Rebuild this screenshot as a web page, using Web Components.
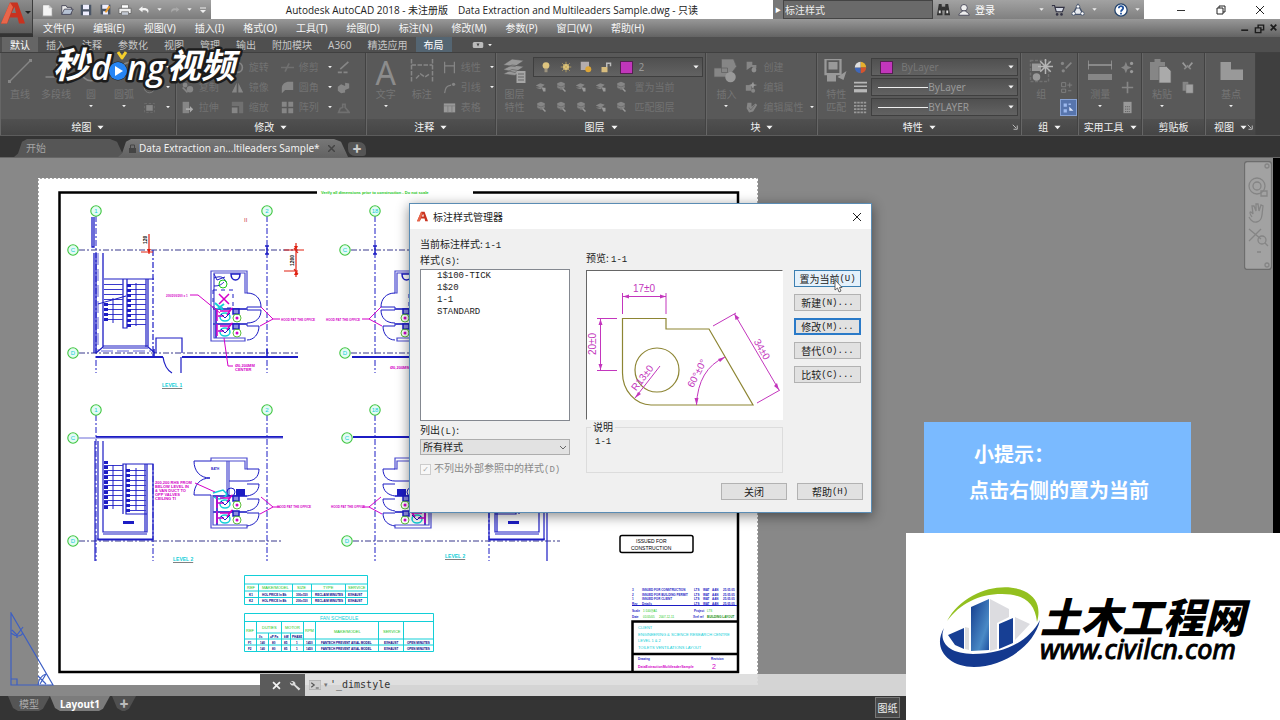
<!DOCTYPE html>
<html lang="zh-CN">
<head>
<meta charset="utf-8">
<title>Autodesk AutoCAD 2018</title>
<style>
  html, body { margin: 0; height: 100%; }
  body { font: 10px/14px "Noto Sans", "Noto Sans CJK SC", sans-serif; color: #e6e6e6; background: #333; overflow: hidden; }
</style>
</head>
<body>
<cad-app></cad-app>
<script>
const BASE = `*{box-sizing:border-box}button,input,select{font:inherit;color:inherit;margin:0;padding:0;border:0;background:none;border-radius:0}button{display:flex;align-items:center;justify-content:center;white-space:nowrap}svg{display:block}a{color:inherit;text-decoration:none}`;
const define = (name, render, css) => customElements.define(name, class extends HTMLElement {
  connectedCallback() {
    if (this.shadowRoot) return;
    this.attachShadow({ mode: "open" }).innerHTML = `<style>${BASE}${css}</style>${render(this)}`;
  }
});

/* ---------- icons on a 16x16 grid ---------- */
const G = "#868686", D = "#707070";
const ICONS = {
  caret: `<path d="M3 5h10l-5 6z" fill="#eee"/>`,
  down: `<path d="M1 4h14l-7 8z" fill="#f4f4f4"/>`,
  new: `<path d="M3 2h7l4 4v9H3z" fill="#f4f4f4" stroke="#888"/><path d="M10 2v4h4" fill="#ccc"/>`,
  open: `<path d="M2 3h5l1 2h5v8H2z" fill="#eee" stroke="#445"/><path d="M2 13l3-6h10l-3 6z" fill="#b6c2d4" stroke="#445"/>`,
  save: `<path d="M1 1h14v14H1z" fill="#4a5566"/><path d="M4 1h8v6H4zM4 10h8v5H4z" fill="#eef"/>`,
  saveas: `<path d="M2 2h12v12H2z" fill="#4a5566"/><path d="M4 2h8v5H4zM5 10h6v4H5z" fill="#eef"/><path d="M7 11l5-8 2 2-5 7z" fill="#e99b2c"/>`,
  print: `<path d="M4 2h8v5H4z" fill="#fff" stroke="#777"/><path d="M1 6h14v6H1z" fill="#eee" stroke="#666"/><path d="M4 10h8v4H4z" fill="#c4cad4" stroke="#777"/>`,
  undo: `<path d="M6 3L1 7l5 4V8.500c5-1 7 1 7 4 3-5-1-8-7-7z" fill="#f2f2f2"/>`,
  redo: `<path d="M10 3l5 4-5 4V8.500c-5-1-7 1-7 4-3-5 1-8 7-7z" fill="#aaa"/>`,
  qmenu: `<path d="M2 3h12v2H2zM2 8h12l-6 6z" fill="#eee"/>`,
  binoc: `<path d="M3 2h3l1 12H1zM10 2h3l2 12H9z" fill="#333"/><path d="M6 5h4v4H6z" fill="#333"/><path d="M3 9h2v3H3zM11 9h2v3h-2z" fill="#ddd"/>`,
  person: `<circle cx="8" cy="5.500" r="3.800" fill="#eee" stroke="#445"/><path d="M2 14c1-4 4-3 4-5h4c0 2 3 1 4 5z" fill="#eee" stroke="#445"/>`,
  cart: `<path d="M1 3h3l2 7h7l2-5H5" fill="#d6dbe6" stroke="#334" stroke-width="1.300"/><circle cx="7" cy="13" r="1.500" fill="#334"/><circle cx="12" cy="13" r="1.500" fill="#334"/>`,
  a360: `<path d="M8 2l6 11H2z" fill="#e8ebf0" stroke="#46536b" stroke-width="1.600"/><circle cx="8" cy="4" r="2" fill="#fff" stroke="#46536b"/><circle cx="3" cy="12" r="2" fill="#fff" stroke="#46536b"/><circle cx="13" cy="12" r="2" fill="#fff" stroke="#46536b"/>`,
  help: `<circle cx="8" cy="8" r="7" fill="#fff" stroke="#26456e" stroke-width="1.500"/><path d="M5.500 6c0-3.500 5-3 5 0 0 1.500-2.500 2-2.500 4M8 11v2" stroke="#1c4f9c" stroke-width="2" fill="none"/>`,
  min: `<path d="M4 8.500h8" stroke="#333"/>`,
  restore: `<path d="M4 6h6v6H4zM6 6V4h6v6h-2" fill="none" stroke="#222"/>`,
  x: `<path d="M4 4l8 8M12 4l-8 8" stroke="#222"/>`,
  wx: `<path d="M3 3l10 10M13 3L3 13" stroke="#f2f2f2" stroke-width="2.500"/>`,
  bmin: `<path d="M2 11.500h11" stroke="#1c1c1c" stroke-width="2.500"/>`,
  brestore: `<path d="M2 7h8v7H2zM6 7V3h8v7h-4" fill="none" stroke="#1c1c1c" stroke-width="2"/>`,
  bx: `<path d="M3 3l10 10M13 3L3 13" stroke="#1c1c1c" stroke-width="3"/>`,
  cam: `<rect x="1" y="4" width="14" height="8" rx="2" fill="#bbb"/><path d="M6 6h4l-2 4z" fill="#444"/>`,
  line: `<path d="M1 15L15 1" stroke="${G}"/><path d="M0 14h2v2H0zM14 0h2v2h-2z" fill="${G}"/>`,
  pline: `<path d="M1 12h7c6 0 6-8 0-8" fill="none" stroke="${G}"/>`,
  circle: `<circle cx="8" cy="8" r="6.500" fill="none" stroke="${G}"/>`,
  arc: `<path d="M2 14C2 7 7 2 14 2" fill="none" stroke="${G}"/>`,
  hatch: `<path d="M2 3h12v11H2z" fill="none" stroke="${D}" stroke-dasharray="3 2"/><path d="M4 5h8v7H4z" fill="${G}"/>`,
  rect: `<path d="M2 4h12v8H2z" fill="none" stroke="${D}"/>`,
  move: `<path d="M8 1v14M1 8h14" stroke="${D}" stroke-width="2"/>`,
  copy: `<circle cx="5" cy="5" r="3" fill="${G}"/><circle cx="11" cy="10" r="4" fill="${G}"/><path d="M2 8l6 6" stroke="${G}" stroke-width="2"/>`,
  stretch: `<path d="M2 1h8v14H2z" fill="${G}"/><path d="M6 9h5V6l4 4-4 4v-3H6z" fill="#aaa"/>`,
  rotate: `<path d="M8 2a6 6 0 1 1-6 6" fill="none" stroke="${G}" stroke-width="2"/>`,
  mirror: `<path d="M7 2v12H1zM9 2v12h6z" fill="${G}"/>`,
  scale: `<path d="M1 1h14v14h-5V6H1z" fill="${D}"/><path d="M1 8h7v7H1z" fill="${G}"/>`,
  trim: `<path d="M0 8h16M10 3L5 13" stroke="${D}" stroke-width="2"/>`,
  fillet: `<path d="M1 15V9c0-5 4-8 9-8h5v10H5z" fill="${G}"/>`,
  array: `<path d="M1 1h6v6H1zM9 1h6v6H9zM1 9h6v6H1zM9 9h6v6H9z" fill="${G}"/>`,
  pen: `<path d="M1 14h5M8 14h5M4 10l10-9" stroke="${G}" stroke-width="2"/>`,
  cubes: `<path d="M1 7l4-3 5 2 0-4 5 1v6l-5 2v3l-5 1-4-3z" fill="${G}"/>`,
  offset: `<path d="M2 14l2-5 3-1V4h3v4l5 6z" fill="none" stroke="${D}" stroke-width="2"/>`,
  dim: `<path d="M1 0v16M15 0v16M1 4h14M4 13l3-3 3 2 3-2" fill="none" stroke="${G}" stroke-dasharray="3 1"/>`,
  linear: `<path d="M2 1v14M14 1v14M2 6h12" fill="none" stroke="${G}" stroke-width="1.500"/>`,
  leader: `<path d="M2 15c1-7 2-9 8-10" fill="none" stroke="${G}" stroke-width="1.500"/><circle cx="13" cy="4" r="2" fill="${G}"/>`,
  tbl: `<path d="M1 3h14v11H1z" fill="#999"/><path d="M1 6h14M6 6v8M11 6v8" stroke="#7c7c7c"/>`,
  layers: `<path d="M0 4l6-4 8 1-6 4zM0 7l6-3 8 1-6 4zM0 10l6-3 6 1-4 3z" fill="#999" stroke="#555" stroke-width=".4"/><path d="M9 8h6v8H9z" fill="#a6a6a6"/><path d="M10 10h4M10 12h4M10 14h4" stroke="#666" stroke-width=".8"/>`,
  lay: `<path d="M1 6l6-3 6 2-5 4zM1 9l6 2 5-3" fill="${G}"/><path d="M9 9h5v5h-3z" fill="#999"/>`,
  lay2: `<path d="M3 3l5-2 5 2v6l-5 3-5-3z" fill="${G}"/><path d="M3 6l5 2 5-2M3 9l5 2 5-2" stroke="#666" fill="none"/><path d="M10 10l4 4" stroke="#999" stroke-width="2"/>`,
  bulb: `<circle cx="8" cy="6" r="4.500" fill="#dfc57f"/><path d="M6 10h4v5H6z" fill="#9c937e"/>`,
  sun: `<circle cx="8" cy="8" r="4" fill="#e5cf88"/><path d="M8 1v14M1 8h14M3 3l10 10M13 3L3 13" stroke="#c9ae62"/>`,
  vp: `<path d="M1 1h11v11H1z" fill="#b3acad"/><circle cx="11" cy="11" r="4" fill="#dda637"/>`,
  lock: `<path d="M2 8h8v7H2z" fill="#d8bd7e"/><path d="M9 8V3h5v4" fill="none" stroke="#bbb" stroke-width="2"/>`,
  insert: `<path d="M5 0h8l2 5-3 4H5zM0 6h9v6H0z" fill="${G}" stroke="#606060" stroke-width=".5"/><circle cx="11" cy="12" r="3.500" fill="#999"/>`,
  create: `<path d="M2 1h7v4h5v4h-3l-3-2-6 4z" fill="${G}"/><circle cx="11" cy="11" r="3" fill="#8e8e8e"/>`,
  edit: `<path d="M1 5h7v7H1z" fill="${G}"/><path d="M10 1l1 3 4 1-4 1-1 4-2-4-3-1 3-1z" fill="#999"/><circle cx="10" cy="12" r="2.500" fill="${G}"/>`,
  attr: `<path d="M3 2h5v5l5-4 2 2-5 8-5 1-3-5z" fill="${G}"/><path d="M5 8l2 3 5-6" fill="none" stroke="#666"/>`,
  match: `<path d="M1 0h10v10H1z" fill="none" stroke="#999" stroke-width="1.500"/><path d="M3 2h6v5H3zM2 10h6v5H2zM9 12l6-4-2 6z" fill="#999"/>`,
  wheel: `<path d="M8 8V1a7 7 0 0 1 7 7z" fill="#e6b02d"/><path d="M8 8h7a7 7 0 0 1-7 7z" fill="#d5542d"/><path d="M8 8v7a7 7 0 0 1-7-7z" fill="#3f67b9"/><path d="M8 8H1a7 7 0 0 1 7-7z" fill="#dedede"/>`,
  lw: `<path d="M0 2h16M0 6.500h16" stroke="#b8b8b8" stroke-width="2"/><path d="M0 12h16" stroke="#b8b8b8" stroke-width="4"/>`,
  lt: `<path d="M0 2h16M0 6h16M0 10h16M0 14h16" stroke="#999" stroke-width="2" stroke-dasharray="3 1"/>`,
  group: `<path d="M1 1h12v14H1z" fill="none" stroke="${D}" stroke-dasharray="2 1"/><path d="M2 3h6v5H2z" fill="#999"/><circle cx="5" cy="12" r="2.500" fill="#999"/><path d="M11 0v10M6 5h10M7.500 1.500l7 7M14.500 1.500l-7 7" stroke="#b5b5b5"/>`,
  g1: `<circle cx="3" cy="3" r="2" fill="${G}"/><circle cx="4" cy="12" r="2" fill="${G}"/><path d="M7 9l7-7" stroke="${G}" stroke-width="2"/>`,
  g2: `<path d="M2 2h5v5H2zM2 10h5v4H2z" fill="none" stroke="${G}"/><path d="M12 2v6M9 5h6M10 12h4" stroke="${G}"/>`,
  g3: `<path d="M2 3h4v4H2zM2 10h4v4H2zM8 3h3v2H8z" fill="#9db9ee"/><path d="M9 7l5 5h-5z" fill="#dfe9ff"/>`,
  measure: `<path d="M0 1v6M16 1v6M0 4h16" stroke="#999"/><path d="M0 10h16v4H0z" fill="${G}"/>`,
  star: `<path d="M6 1l2 5 5 2-5 2-2 5-2-5-4-2 4-2z" fill="${G}"/><circle cx="13" cy="3" r="2" fill="#999"/><circle cx="13" cy="13" r="2" fill="#999"/>`,
  point: `<path d="M8 1v14M1 8h14" stroke="${G}" stroke-width="2"/>`,
  calc: `<path d="M3 1h10v14H3z" fill="#999"/><path d="M5 7h6M5 10h6M5 13h6" stroke="#555" stroke-dasharray="1.500 1"/>`,
  paste: `<path d="M0 2h10v12H0zM3 0h4v3H3z" fill="${G}"/><path d="M6 5h5l3 3v8H6z" fill="#aaa" stroke="#666" stroke-width=".5"/>`,
  cut: `<path d="M2 2l5 6M14 2L9 8" stroke="#999" stroke-width="2"/><path d="M4 10l4-4 4 4" fill="none" stroke="#888" stroke-width="2"/>`,
  copyclip: `<path d="M2 1h7v11H2z" fill="${G}"/><path d="M6 4h9v11H6z" fill="#a2a2a2" stroke="#666" stroke-width=".5"/>`,
  base: `<path d="M1 2h7v5h8v7H1z" fill="#999"/>`,
  launch: `<path d="M2 2l9 9M14 4v10H4" stroke="#ddd" stroke-width="2" fill="none"/>`,
  wrench: `<path d="M2 3a4 4 0 0 1 6 4l6 5-2 2-6-6a4 4 0 0 1-5-4l3 2 1-2z" fill="#ddd"/>`,
  prompt: `<path d="M0 2h16v12H0z" fill="#cfcfcf" stroke="#aaa"/><path d="M3 5l4 3-4 3M9 12h4" fill="none" stroke="#555" stroke-width="1.500"/>`,
  logo: `<path d="M0 15L6 1h5l5 14h-4l-1-4H6l-2 4zM7 8h3L9 4z" fill="#c8321f" fill-rule="evenodd"/><path d="M0 15L6 1l2 3-4 11z" fill="#e8664a"/>`
};
define("cad-icon", el => `<svg viewBox="0 0 16 16" aria-hidden="true">${ICONS[el.getAttribute("name")] || ""}</svg>`,
  `:host{display:block;width:var(--s,12px);height:var(--s,12px);flex:none}svg{width:100%;height:100%}`);
const ic = (n, s = 12) => `<cad-icon name="${n}" style="--s:${s}px"></cad-icon>`;

/* ---------- title bar and menus ---------- */
define("cad-header", () => `
<button class="app" aria-label="应用程序菜单">${ic("logo", 24)}</button>
<div class="title">
  <div class="qat">${[["new", 14], ["open", 14], ["save", 12], ["saveas", 13], ["print", 14], ["undo", 12], ["caret", 7], ["redo", 10], ["caret", 7], ["qmenu", 8]].map(([n, s]) => `<button aria-label="${n}">${ic(n, s)}</button>`).join("")}</div>
  <div class="name"><span>Autodesk AutoCAD 2018 - 未注册版</span><span>Data Extraction and Multileaders Sample.dwg - 只读</span></div>
  <button class="tri" aria-label="展开">▶</button>
  <input class="search" aria-label="搜索" value="标注样式">
  <div class="info"><button aria-label="搜索">${ic("binoc", 15)}</button><button class="login">${ic("person", 14)}<span>登录</span></button><i></i>${ic("caret", 7)}<button aria-label="商店">${ic("cart", 14)}</button><button aria-label="A360">${ic("a360", 14)}</button>${ic("caret", 7)}<b></b><button aria-label="帮助">${ic("help", 14)}</button>${ic("caret", 7)}</div>
  <div class="win"><button aria-label="最小化">${ic("min", 16)}</button><button aria-label="还原">${ic("restore", 16)}</button><button aria-label="关闭">${ic("x", 16)}</button></div>
</div>
<nav>${["文件(F)", "编辑(E)", "视图(V)", "插入(I)", "格式(O)", "工具(T)", "绘图(D)", "标注(N)", "修改(M)", "参数(P)", "窗口(W)", "帮助(H)"].map(t => `<a href="#">${t}</a>`).join("")}
  <div class="doc">${ic("bmin", 10)}${ic("brestore", 11)}${ic("bx", 9)}</div></nav>`,
`:host{display:grid;grid-template:19px 18px/33px 1fr;flex:none}
.app{grid-row:1/3;background:linear-gradient(#8b8b8b,#5c5c5c);border:1px solid #3c3c3c;border-width:0 1px 1px 0;height:34px;justify-content:flex-start;padding:0 0 8px 1px}
.app::after{content:"";border:3px solid transparent;border-top-color:#222;border-bottom:0}
.title{display:flex;min-width:0;background:#fff}
.qat{width:178px;flex:none;display:flex;align-items:center;justify-content:space-between;padding:0 4px 0 7px;background:linear-gradient(#a2a2a2,#7c7c7c)}
.name{flex:1;min-width:0;display:flex;gap:10px;align-items:center;justify-content:center;white-space:nowrap;color:#222;font:11px/16px "Open Sans","Noto Sans CJK SC",sans-serif;font-size:10px;overflow:hidden}
.tri{width:10px;background:#777;color:#fff;font-size:6px}
.search{width:150px;background:#6a6a6a;border:1px solid #444;padding:0 1px;color:#eee;flex:none}
.info{width:211px;flex:none;background:linear-gradient(#a2a2a2,#808080);display:flex;align-items:center;gap:6px;padding:0 3px 0 3px;color:#fff}
.login{gap:4px}.info i{flex:1}.info b{width:4px}
.win{width:136px;flex:none;display:flex;align-items:center;justify-content:space-between;padding:0 12px 0 29px}
nav{background:linear-gradient(#989898,#636363);display:flex;align-items:center;gap:19px;padding:0 2px 0 10px;white-space:nowrap;color:#f6f6f6}
.doc{margin-left:auto;display:flex;gap:4px}`);

/* ---------- ribbon ---------- */
define("ribbon-tabs", () => ["默认", "插入", "注释", "参数化", "视图", "管理", "输出", "附加模块", "A360", "精选应用", "布局"]
  .map((t, i) => `<button class="${i === 0 ? "on" : i === 10 ? "ctx" : ""}">${t}</button>`).join("") + `<span>${ic("cam", 12)}${ic("caret", 6)}</span>`,
`:host{display:flex;height:16px;flex:none;background:#4f4f4f;padding-left:2px;border-bottom:1px solid #404040}
button{padding:0 8px;color:#c6c6c6}.on{background:#656565;color:#fff}.ctx{background:#546572;color:#fff}
span{display:flex;align-items:center;gap:3px;padding-left:20px}`);

define("ribbon-panel", el => `<div class="body"><slot></slot></div><footer><span>${el.getAttribute("label")}</span>${el.hasAttribute("plain") ? "" : ic("down", 7)}${el.hasAttribute("launch") ? `<em>${ic("launch", 6)}</em>` : ""}</footer>`,
`:host{display:flex;flex-direction:column;min-width:0;overflow:hidden;border-right:1px solid #424242;border-left:1px solid #666}
.body{flex:1;display:flex;padding:4px 0 0 4px;gap:4px;background:#595959;min-width:0;min-height:0}
footer{height:16px;flex:none;display:flex;align-items:center;justify-content:center;gap:6px;background:linear-gradient(#505050,#454545);color:#f2f2f2;position:relative;white-space:nowrap}
em{position:absolute;right:2px}`);

define("ribbon-big", el => `<button>${el.hasAttribute("glyph") ? `<b>A</b>` : ic(el.getAttribute("icon"), +el.getAttribute("size") || 24)}<span>${el.getAttribute("label").replace("|", "<br>")}</span>${el.hasAttribute("arrow") ? ic("caret", 6) : ""}</button>`,
`:host{display:block;width:var(--w,30px);flex:none;color:#757575}
button{width:100%;height:60px;flex-direction:column;justify-content:flex-start;line-height:13px}
cad-icon:first-child,b{margin:2px 0 5px;height:24px}cad-icon:last-child{margin-top:2px}b{font:32px/28px "Noto Sans",sans-serif;color:#8c8c8c}`);

define("ribbon-cmd", el => `<button aria-label="${el.getAttribute("label") || el.getAttribute("icon")}">${ic(el.getAttribute("icon"), 13)}<span>${el.getAttribute("label") || ""}</span></button>${el.hasAttribute("arrow") ? ic("caret", 6) : ""}`,
`:host{display:flex;align-items:center;justify-content:space-between;height:20px;color:#727272;gap:4px}button{gap:5px}:host([on]) button{background:#5775ad;border:1px solid #88a3d6;width:17px;height:17px}span:empty{display:none}`);

define("ribbon-combo", el => `<slot></slot><select aria-label="${el.getAttribute("label")}"><option>${el.getAttribute("value")}</option></select>${ic("down", 6)}`,
`:host{display:flex;align-items:center;height:18px;border:1px solid #3f3f3f;background:linear-gradient(#505050,#626262);color:#999;padding:0 3px 0 6px;min-width:0}
select{appearance:none;flex:1;min-width:0;height:16px;outline:0}`);

const cmds = (w, list) => `<div class="col" style="width:${w}px">${list.map(([i, l, a]) => `<ribbon-cmd icon="${i}" ${l ? `label="${l}"` : ""} ${a ? "arrow" : ""} ${i === "g3" ? "on" : ""}></ribbon-cmd>`).join("")}</div>`;
define("cad-ribbon", () => `
<ribbon-panel label="绘图"><ribbon-big icon="line" label="直线"></ribbon-big><ribbon-big icon="pline" label="多段线" style="--w:34px"></ribbon-big><ribbon-big icon="circle" label="圆" arrow style="--w:28px"></ribbon-big><ribbon-big icon="arc" label="圆弧" arrow></ribbon-big>${cmds(28, [["rect", "", 1], ["circle", "", 1], ["hatch", "", 1]])}</ribbon-panel>
<ribbon-panel label="修改">${cmds(46, [["move", "移动"], ["copy", "复制"], ["stretch", "拉伸"]])}${cmds(46, [["rotate", "旋转"], ["mirror", "镜像"], ["scale", "缩放"]])}${cmds(52, [["trim", "修剪", 1], ["fillet", "圆角", 1], ["array", "阵列", 1]])}${cmds(22, [["pen"], ["cubes"], ["offset"]])}</ribbon-panel>
<ribbon-panel label="注释"><ribbon-big glyph label="文字" arrow></ribbon-big><ribbon-big icon="dim" label="标注" style="--w:34px"></ribbon-big>${cmds(52, [["linear", "线性", 1], ["leader", "引线", 1], ["tbl", "表格"]])}</ribbon-panel>
<ribbon-panel label="图层"><ribbon-big icon="layers" label="图层|特性" style="--w:28px"></ribbon-big>
  <div class="stack"><ribbon-combo label="图层" value="2"><div class="row">${ic("bulb")}${ic("sun")}${ic("vp")}${ic("lock")}<i></i></div></ribbon-combo>
  <div class="tools">${"lay lay2 lay lay lay2".split(" ").map(n => ic(n, 12)).join("")}<button>置为当前</button></div><div class="tools">${"lay2 lay2 lay2 lay lay2".split(" ").map(n => ic(n, 12)).join("")}<button>匹配图层</button></div></div></ribbon-panel>
<ribbon-panel label="块"><ribbon-big icon="insert" label="插入" arrow></ribbon-big>${cmds(70, [["create", "创建"], ["edit", "编辑"], ["attr", "编辑属性", 1]])}</ribbon-panel>
<ribbon-panel label="特性" launch><ribbon-big icon="match" label="特性|匹配" style="--w:28px"></ribbon-big><div class="props">${ic("wheel", 13)}<ribbon-combo label="对象颜色" value="ByLayer" class="dim"><i></i></ribbon-combo>${ic("lw", 13)}<ribbon-combo label="线宽" value="ByLayer"><u></u></ribbon-combo>${ic("lt", 13)}<ribbon-combo label="线型" value="BYLAYER"><u></u></ribbon-combo></div></ribbon-panel>
<ribbon-panel label="组"><ribbon-big icon="group" label="组" size="26"></ribbon-big>${cmds(17, [["g1"], ["g2"], ["g3"]])}</ribbon-panel>
<ribbon-panel label="实用工具"><ribbon-big icon="measure" label="测量" arrow style="--w:34px"></ribbon-big>${cmds(16, [["star"], ["point"], ["calc"]])}</ribbon-panel>
<ribbon-panel label="剪贴板" plain><ribbon-big icon="paste" label="粘贴" arrow></ribbon-big>${cmds(16, [["cut"], ["copyclip"]])}</ribbon-panel>
<ribbon-panel label="视图" launch><ribbon-big icon="base" label="基点" arrow style="--w:42px"></ribbon-big></ribbon-panel>`,
`:host{display:grid;grid-template-columns:176fr 190fr 130fr 211fr 111fr 204fr 57fr 64fr 63fr 51fr 24fr;height:83px;flex:none;background:#3f3f3f;border-bottom:1px solid #5c5c5c}
.col{flex:none}.stack{flex:1;min-width:0;padding-right:2px}.row,.tools{display:flex;align-items:center;gap:8px}.tools{height:20px;padding-left:2px;color:#727272}
.stack ribbon-combo{height:20px}.row{margin-right:6px}i{width:13px;height:13px;background:#c136bb;border:1px solid #552052;flex:none}
.props{flex:1;min-width:0;display:grid;grid-template:repeat(3,20px)/13px 1fr;column-gap:4px;align-items:center;padding-right:2px}
.dim{color:#777}.dim i{margin:0 8px 0 2px}u{width:50px;height:1px;background:#eee}`);

/* ---------- document tabs and layout tabs ---------- */
define("doc-tabs", () => `<button class="t a">开始</button><button class="t b"><svg width="7" height="9" viewBox="0 0 7 9"><path d="M0 4h7v5H0z" fill="#444"/><path d="M1.500 4V1h4v3" fill="none" stroke="#444"/></svg><span>Data Extraction an...ltileaders Sample*</span><svg width="7" height="7" viewBox="0 0 7 7"><path d="M0 0l7 7M7 0L0 7" stroke="#444" stroke-width="1.500"/></svg></button><button class="p" aria-label="新建">✚</button>`,
`:host{display:flex;height:22px;flex:none;background:#343434;padding:3px 0 0 14px;border-bottom:1px solid #666}
.t{justify-content:flex-start;clip-path:polygon(0 100%,4px 80%,8px 15%,13px 0,calc(100% - 14px) 0,calc(100% - 7px) 15%,calc(100% - 2px) 75%,100% 100%)}
.a{width:110px;background:#565656;color:#a5a5a5;padding-left:12px}.b{width:230px;margin-left:-6px;background:linear-gradient(#777,#636363);color:#f2f2f2;padding-left:11px;gap:3px}
.b svg{flex:none}.b span{margin-right:5px}.p{width:18px;height:14px;margin-top:3px;border-radius:3px 7px 3px 7px;background:#555;color:#ccc;font-size:9px}`);

define("layout-tabs", () => `<button class="m">模型</button><button class="l">Layout1</button><button class="p" aria-label="新建布局">✚</button><button class="paper">图纸</button>`,
`:host{display:flex;height:24px;flex:none;background:#343434;padding-left:8px;align-items:flex-start}
button{height:15px}.m,.l,.p{clip-path:polygon(0 0,100% 0,calc(100% - 7px) 85%,calc(100% - 11px) 100%,10px 100%,5px 80%)}
.m{width:42px;background:#555;color:#aaa}.l{width:60px;background:#7c7c7c;color:#fff;font-weight:700}.p{width:24px;background:#505050;color:#bbb;font-size:9px;margin-left:2px}
.paper{margin:1px 380px 0 auto;width:25px;height:21px;border:1px solid #777;background:#484848;color:#eee}`);

/* ---------- the drawing sheet ---------- */
const B = "#1c1cc4", M = "#d400c8", C = "#12cfd8", GR = "#19c819";
const L = (x1, y1, x2, y2, c = B, w = 1, x = "") => `<path d="M${x1} ${y1}L${x2} ${y2}" stroke="${c}" stroke-width="${w}" ${x}/>`;
const P = (d, c = B, w = 1, x = "") => `<path d="${d}" fill="none" stroke="${c}" stroke-width="${w}" ${x}/>`;
const T = (x, y, s, c, z = 4, x2 = "") => `<text x="${x}" y="${y}" fill="${c}" font-size="${z}" ${x2}>${s}</text>`;
const BOLD = 'font-weight="700"', DASH = 'stroke-dasharray="6 2 2 2"';
const grid = (x, y, t) => `<circle cx="${x}" cy="${y}" r="5.200" fill="#e4fbf4" stroke="#3fc63f" stroke-width="1.100"/>${T(x, y + 2, t, C, 6, 'text-anchor="middle"')}`;
const treads = (x1, x2, y1, y2, s) => { let o = ""; for (let y = y1; y <= y2; y += s) o += L(x1, y + .5, x2, y + .5, "#3a3acc"); return o; };
const blocks = (x, y1, y2, s) => { let o = ""; for (let y = y1; y <= y2; y += s) o += `<rect x="${x}" y="${y}" width="4" height="3" fill="${B}"/>`; return o; };
const wc = (x, y) => `<ellipse cx="${x + 8}" cy="${y + 6}" rx="5" ry="4" fill="none" stroke="${C}" stroke-width="1.500"/><path d="M${x} ${y - 2}v12M${x + 3} ${y}h9l4-3M${x + 10} ${y + 4}l5-7M${x + 1} ${y + 5}h6" stroke="${M}" stroke-width="1.500" fill="none"/><path d="M${x + 4} ${y + 3}l4 4 5-5" fill="none" stroke="${B}"/><rect x="${x + 16}" y="${y - 2}" width="6" height="5" fill="#8c8ce0" stroke="${B}" stroke-width="1.500"/><circle cx="${x + 20}" cy="${y + 7}" r="4" fill="none" stroke="#5fbe3c"/><circle cx="${x + 20}" cy="${y + 7}" r="1.500" fill="${M}"/>`;
const toilet1 = P("M211 271h36v22h-2v-20h-31v65h31v3h-34z", "#4a4ad0", 1.2) + P("M247 293c9 0 14 6 14 14h-14v3h14c0 8-5 13-14 13v3h12c0 8-5 14-12 14") + P("M213 309h34M213 324h34M216 310v28", "#4a4ad0", 2)
  + P("M231 274c0 8 9 8 9 0z", B, 1.5) + `<rect x="213" y="290" width="20" height="18" fill="none" stroke="${B}" stroke-dasharray="4 4"/>` + P("M219 294l10 10M229 294l-10 10", M, 1.5) + P("M214 278c8-3 10 0 12 4M214 286c6 0 8-2 10-4M214 274l3 6 8-3") + `<circle cx="223" cy="284" r="4" fill="none" stroke="${GR}"/>` + P("M215 303l8 7M216 310l8-6", C, 2) + wc(217, 311) + wc(217, 326);
const toilet2 = P("M211 461v-3h36v11h-2v-8h-34M229 461v34M227 461v34M211 495v33h36v-3h-34v-30", "#4a4ad0", 1.2) + P("M211 461h-17c0 10 6 17 16 17-10 0-16 7-16 17h17M247 469h12c0 8-5 12-12 12h-18M247 484h12c0 7-5 11-12 12M247 499h12c0 7-5 11-12 12M247 513h12c0 8-5 12-12 13") + P("M213 496h34M213 512h34M217 497v28", "#4a4ad0", 2) + `<circle cx="231" cy="492" r="4" fill="none" stroke="${B}"/><rect x="236" y="489" width="9" height="7" fill="${B}"/>` + P("M213 493l10-3 4 4M214 497c5 4 12 1 13-4", C, 1.5) + wc(217, 498) + wc(217, 513);
const stair1 = P("M94 217v30h-2v-30M96 253v100M94 253v100M103 253v94", B, 1.3) + P("M98 253v98M101 351h50", "#6060d8", 1, 'stroke-dasharray="12 4"') + P("M104 279h50M123 279v49h4v-49M146 279v68M148 279v68M103 346h45M103 348h45M103 347l-7 6M148 347l7 6", B, 1.2) + treads(104, 123, 284, 323, 5) + treads(127, 146, 284, 325, 5) + blocks(104, 303, 320, 5) + blocks(127, 284, 324, 5) + P("M113 298v25M136 283v43M98 304l28-8") + L(153, 250, 153, 358, B, 1.2, DASH);
const stair2 = P("M95 441v120M98 441v99h55M97 539h56M103 441v91h44v-68M123 514v-50h30v76M126 464v50h21M145 464v68M103 534h44", B, 1.2) + treads(104, 123, 465, 508, 5) + treads(127, 146, 470, 513, 5) + blocks(104, 461, 508, 5) + blocks(126, 469, 512, 5) + P("M113 465v44M136 468v42") + `<rect x="123" y="521" width="11" height="3" fill="${B}"/>` + L(153, 464, 153, 561, B, 1, DASH);
define("cad-sheet", () => `<svg viewBox="38 178 720 507" role="img" aria-label="图纸" font-family="Liberation Sans, sans-serif">
<rect x="38" y="178" width="720" height="507" fill="#fff"/><path d="M38.500 685V178.500H757.500V685" fill="none" stroke="#aaa" stroke-dasharray="2 2"/>
<path d="M317 192.500H59.500V672H738V192.500H473" fill="none" stroke="#000" stroke-width="2.500"/>
${T(321, 194, "Verify all dimensions prior to construction - Do not scale", GR, 4, BOLD)}
${[96, 267, 375].map(x => L(x, 216, x, 373, B, 1, DASH) + L(x, 415, x, 561, B, 1, DASH)).join("")}
${L(79, 250, 298, 250, "#38388c", 1, DASH)}${L(351, 250, 560, 250, "#38388c", 1, DASH)}${L(79, 353, 298, 353, "#38388c", 1, DASH)}${L(351, 353, 560, 353, "#38388c", 1, DASH)}
${L(96, 357, 163, 357, B, 2)}${L(182, 357, 298, 357, B, 2)}${L(352, 357, 410, 357, B, 2)}
${L(96, 437, 283, 437, B, 2)}${L(79, 438, 283, 438, "#6a6ad8", 1)}${L(353, 437, 410, 437, B, 2)}${L(79, 541, 283, 541, "#38388c", 1, DASH)}${L(353, 541, 560, 541, "#38388c", 1, DASH)}
${stair1}${stair2}${toilet1}${toilet2}
<g transform="translate(642 0) scale(-1 1)">${toilet1}${toilet2}${stair2}</g>
${P("M156 353v-15h26v15M163 357c1 7 4 13 9 16M181 357v16", B, 1.2)}
${P("M267 246v8M265 246h4M265 254h4M375 246v8M373 246h4M373 254h4M267 349v8M154 349v8", B, 1.5)}
${P("M149 234v20M141 252h12M296 243v34M284 250h20M284 271h14M294 248l4 5M294 269l4 5", "#e02010", 1.2)}<path d="M147 249h4l-2 4zM294 246h4l-2 4zM294 275h4l-2-4z" fill="#e02010"/>
${T(0, 0, "120", "#111", 5, 'transform="translate(147 244) rotate(-90)" font-weight="700"')}${T(0, 0, "1200", "#111", 5, 'transform="translate(294 266) rotate(-90)" font-weight="700"')}${T(244, 222, "II", "#c44", 6)}
${[[0, 0, 0], [190, 188, 188]].map(([a, b, c]) => P(`M261 ${307 + a}L273 ${319 + b}L260 ${326 + c}M273 ${319 + b}h7M381 ${307 + a}L369 ${319 + b}L382 ${326 + c}M369 ${319 + b}h-7`, M)).join("")}
${[[281, 321], [326, 321], [277, 508], [331, 508]].map(([x, y]) => T(x, y, "HOOD PAT THE OFFICE", M, 3, BOLD)).join("")}
${P("M190 295h8l22 18M224 338l4 28h5M195 483l20 9", M)}${T(166, 297, "200/200/200 x 1", M, 3, BOLD)}${T(235, 367, "Ø0,200MM", M, 4, BOLD)}${T(235, 371, "CENTER", M, 4, BOLD)}${T(390, 369, "Ø0,200MM", M, 4, BOLD)}
${["200,200 RHS FROM", "BELOW LEVEL IN", "& VAN DUCT TO", "OPP VALVES", "CEILING TI"].map((t, i) => T(155, 484 + i * 4, t, M, 4, BOLD)).join("")}${T(211, 470, "BATH", B, 3, BOLD)}
<g text-decoration="underline">${T(162, 387, "LEVEL 1", C, 5, BOLD)}${T(173, 561, "LEVEL 2", C, 5, BOLD)}${T(445, 558, "LEVEL 2", C, 5, BOLD)}</g>
${grid(96, 211, "1")}${grid(267, 211, "2")}${grid(375, 211, "18")}${grid(73, 250, "C")}${grid(345, 250, "C")}${grid(73, 353, "D")}${grid(345, 353, "D")}
${grid(96, 410, "1")}${grid(267, 410, "2")}${grid(375, 410, "18")}${grid(73, 438, "C")}${grid(347, 438, "C")}${grid(73, 541, "D")}${grid(347, 541, "D")}
${P("M244.500 575.500h123v29h-123zM244 584h124M244 591h124M244 597.500h124M258.500 584v20M292.500 584v20M311.500 584v20M345.500 584v20", C)}
${[["REF", 247], ["MAKE/MODEL", 262], ["SIZE", 297], ["TYPE", 323], ["SERVICE", 348]].map(([t, x]) => T(x, 589, t, GR, 4)).join("")}
${[0, 1].map(i => ["K" + (i + 1), "HOL PRICE In Bk", i ? "200x150" : "300x150", "RECLAIM MINUTES", "EXHAUST"].map((t, j) => T([249, 262, 296, 315, 348][j], 595.5 + i * 6, t, "#000080", 3, BOLD)).join("")).join("")}
${P("M244.500 613.500h189v38h-189zM244 621.500h190M244 639h190M244 645h190M256 633h47M256.500 621v30M281.500 621v30M303.500 621v30M315.500 621v30M378.500 621v30M403.500 621v30M268.500 633v18M290.500 633v18", C)}
${T(320, 619.5, "FAN SCHEDULE", C, 5)}${[["REF", 246, 632], ["DUTIES", 262, 629], ["MOTOR", 285, 629], ["RPM", 305, 632], ["MAKE/MODEL", 334, 632.5], ["SERVICE", 383, 632.5]].map(([t, x, y]) => T(x, y, t, GR, 4)).join("")}
${[["l/s", 259], ["∆P Pa", 270], ["kW", 284], ["PHASE", 292]].map(([t, x]) => T(x, 637.5, t, "#000080", 3, BOLD)).join("")}
${[0, 1].map(i => ["F" + (i + 1), "140", "80", "85", "1", "1450", "FANTECH PREVENT AXIAL MODEL", "EXHAUST", "OPEN MINUTES"].map((t, j) => T([248, 260, 272, 284, 296, 306, 321, 384, 407][j], 643.5 + i * 6, t, "#000080", 3, BOLD)).join("")).join("")}
<rect x="620" y="535.500" width="73" height="17" rx="2" fill="#fff" stroke="#000" stroke-width="1.500"/>${T(636, 543, "ISSUED FOR", "#000", 5)}${T(631, 549.5, "CONSTRUCTION", "#000", 5)}
${["ISSUED FOR CONSTRUCTION", "ISSUED FOR BUILDING PERMIT", "ISSUED FOR CLIENT", "Details"].map((t, i) => T(632, 591 + i * 4.5, i > 2 ? "Rev" : 3 - i, B, 3, BOLD) + T(642, 591 + i * 4.5, t, B, 3, BOLD) + [["LTS", 694], ["WAT", 703], ["AAN", 712], ["25.05.05", 723]].map(([s, x]) => T(x, 591 + i * 4.5, s, B, 3, BOLD)).join("")).join("")}
${L(632, 605.5, 737, 605.5, B)}${T(632, 611.5, "Scale", B, 3, BOLD)}${T(643, 611.5, "1:100@A1", GR, 3)}${T(694, 611.5, "Project", B, 3, BOLD)}${T(707, 611.5, "LTS", GR, 3)}${T(632, 617.5, "Date", B, 3, BOLD)}${T(643, 617.5, "01/05/05", GR, 3)}${T(659, 617.5, "2007-12-11", GR, 3)}${T(693, 617.5, "Xref ref", B, 3, BOLD)}${T(707, 617.5, "BUILDING LAYOUT", "#0a8c0a", 3, BOLD)}
${P("M632.500 672v-50.500H738M632 654H738", "#000", 2.5)}
${["CLIENT", "ENGINEERING &amp; SCIENCE RESEARCH CENTRE", "LEVEL 1 &amp; 2", "TOILETS VENTILATIONS LAYOUT"].map((t, i) => T(638, 629 + i * 6.5, t, C, 4)).join("")}
${T(638, 659.5, "Drawing", B, 3, BOLD)}${T(711, 659.5, "Revision", B, 3, BOLD)}${T(638, 668, "DataExtractionMultileaderSample", M, 3.5, BOLD)}${T(712, 668.5, "2", M, 7)}
</svg>`, `:host{display:block}svg{width:100%;height:auto}`);

/* ---------- dialog ---------- */
const K = "#8d8533", V = "#c336bd";
const m = t => `<span class="m">${t}</span>`;
define("dim-style-dialog", () => `
<header>${ic("logo", 11)}<h2>标注样式管理器</h2><button aria-label="关闭">${ic("x", 16)}</button></header>
<div class="body">
  <div class="left"><p>当前标注样式: ${m("1-1")}</p><label for="st">样式${m("(S)")}:</label>
    <select id="st" size="8"><option>1$100-TICK</option><option>1$20</option><option>1-1</option><option>STANDARD</option></select>
    <label for="ls" class="ll">列出${m("(L)")}:</label>
    <div class="drop"><select id="ls"><option>所有样式</option></select><svg width="8" height="5" viewBox="0 0 8 5"><path d="M1 1l3 3 3-3" fill="none" stroke="#666"/></svg></div>
    <label class="chk"><input type="checkbox" checked disabled><span>不列出外部参照中的样式${m("(D)")}</span></label></div>
  <div class="mid"><p>预览: ${m("1-1")}</p>
    <div class="pv"><svg viewBox="587 271 195 148" role="img" aria-label="预览" fill="none" font-family="Liberation Sans, sans-serif">
      <path d="M622.500 373V318.500H666V329H709L753 405H651A29 32 0 0 1 622.500 373z" stroke="${K}" stroke-width="1.200"/><circle cx="657" cy="370" r="22" stroke="${K}" stroke-width="1.200"/>
      <path d="M622.500 314V293M666 314V293M622 296.500H666M617 318.500H597M617 370.500H597M600.500 318V370M713 326l23-13M757 403l23-13M734.500 314L779 390M660 366L635 398M725 357Q698 369 696.500 405" stroke="${V}"/>
      <path d="M623 296.500l6-2v4zM666 296.500l-6-2v4zM600.500 319l-2 6h4zM600.500 370l-2-6h4zM734.500 314l1 6 4-2zM779 390l-5-4 3-3zM635 398l3-6 3 2zM725 357l-5 5-2-3zM696.500 405l-2-7h4z" fill="${V}"/>
      <g fill="${V}" font-size="10" text-anchor="middle"><text x="644" y="292">17±0</text><text transform="translate(596 344) rotate(-90)">20±0</text><text transform="translate(645 380) rotate(-52)">R13±0</text><text transform="translate(700 375) rotate(-62)">60°±0°</text><text transform="translate(759 351) rotate(60)">34±0</text></g>
    </svg></div>
    <fieldset><legend>说明</legend>${m("1-1")}</fieldset></div>
  <div class="right">${[["置为当前", "(U)", "hot"], ["新建", "(N)...", ""], ["修改", "(M)...", "def"], ["替代", "(O)...", ""], ["比较", "(C)...", ""]].map(([a, b, c]) => `<button class="${c}">${a}${m(b)}</button>`).join("")}
  <svg class="cur" width="9" height="14" viewBox="0 0 9 14"><path d="M1 1v10l2.500-2L5 13l2-1-1.500-3.500H8z" fill="#fff" stroke="#444" stroke-width=".8"/></svg></div>
</div>
<footer><button>关闭</button><button>帮助${m("(H)")}</button></footer>`,
`:host{display:flex;flex-direction:column;width:463px;height:310px;background:#f0f0f0;color:#222;border:1px solid #5a8cb4;box-shadow:0 3px 12px #0007;font:10px/12px "Noto Sans CJK SC",sans-serif}
.m{font:9px/12px "Liberation Mono",monospace}
header{height:25px;flex:none;display:flex;align-items:center;background:#fff;padding:0 6px 0 7px;gap:5px}header button{margin-left:auto}h2{font:inherit;margin:0}
.body{display:grid;grid-template-columns:150px 197px 67px;column-gap:16px;padding:9px 10px 0;align-items:start}
p{margin:0}.left p{height:16px}.left{display:flex;flex-direction:column}.left>label{height:15px}
#st{height:152px;border:1px solid #848890;background:#fff;overflow:hidden;font:9px/12px "Liberation Mono",monospace;outline:0;padding-top:1px}option{padding:0 0 0 16px;min-height:12px;line-height:12px}
.left .ll{padding-top:3px;height:18px}
.drop{display:flex;align-items:center;height:16px;border:1px solid #adadad;background:#e2e2e2;padding-right:2px}.drop select{appearance:none;flex:1;padding-left:2px;height:14px}
.left .chk{display:flex;align-items:center;gap:3px;color:#888;height:12px;margin-top:8px;white-space:nowrap}.chk input{appearance:none;width:11px;height:11px;margin:0;border:1px solid #ccc;background:#f8f8f8}.chk input::after{content:"✓";display:block;font:8px/9px "DejaVu Sans",sans-serif;color:#aaa;text-align:center}
.mid{padding-top:14px}.mid p{height:18px}
.pv{height:150px;border:1px solid #fff;border-top-color:#666;border-left-color:#666;background:#fff}.pv svg{width:100%;height:100%}
fieldset{margin:1px 0 0;height:52px;border:1px solid #dcdcdc;padding:1px 8px}legend{padding:0 2px;margin-left:-4px}
.right{position:relative;margin:32px 0 0 -5px;width:67px;display:flex;flex-direction:column;gap:7px}
.right button,footer button{height:17px;border:1px solid #b2b2b2;background:#e1e1e1}.right .hot{border-color:#3c7fb1;background:#e5f1fb}.right .def{border:2px solid #2a7ac8}
.cur{position:absolute;left:40px;top:9px}
footer{margin-top:auto;display:flex;justify-content:flex-end;gap:10px;padding:0 8px 12px}footer button{width:66px}`);

/* ---------- canvas-side widgets ---------- */
define("nav-bar", () => `<svg viewBox="0 0 28 109" fill="none" stroke="#858585" stroke-width="1.300"><rect x=".5" y=".5" width="27" height="108" rx="3" fill="#a2a2a2" stroke="#6d6d6d"/><circle cx="23" cy="5" r="2"/><circle cx="13" cy="25" r="8"/><circle cx="13" cy="25" r="4"/><path d="M17 30h6v5h-6zM8 56c-4-6-1-6 1-3l-1-8 2 0 2 5V43h2l1 7 2-6 2 1-1 9c-1 8-9 10-13 2M5 68l12 10M17 68L5 80"/><circle cx="18" cy="79" r="4"/><path d="M21 82l3 3M13 91h4"/><circle cx="23" cy="104" r="2"/></svg>`, `:host{display:block;width:28px;height:109px}`);

define("command-line", () => `<div class="h"><i></i>${ic("wx", 11)}${ic("wrench", 13)}</div><div class="in">${ic("prompt", 12)}<small>▾</small><input aria-label="命令" value="'_dimstyle"></div>`,
`:host{display:flex;height:22px}.h{width:45px;display:flex;align-items:center;gap:7px;background:#5b5b5b;padding:0 3px 0 4px}i{width:4px;height:12px;background:radial-gradient(#aaa 1px,transparent 0) 0 0/2px 3px}
.in{flex:1;display:flex;align-items:center;background:#dcdcdce8;padding-left:4px;color:#333}small{font-size:7px;color:#777;padding:0 2px 0 3px}input{flex:1;font:10px/14px "DejaVu Sans Mono",monospace;outline:0}`);

define("tip-card", () => `<h3>小提示：</h3><p>点击右侧的置为当前</p>`,
`:host{display:block;width:267px;height:111px;background:#7abaff;color:#fff;font:700 20px/36px "Noto Sans CJK SC",sans-serif;padding:14px 0 0 45px;white-space:nowrap}h3,p{font:inherit;margin:0}h3{text-indent:5px}`);

define("site-brand", () => `<svg viewBox="0 0 104 84" aria-hidden="true">
<defs><linearGradient id="b" x1="0" y1="0" x2="1" y2="1"><stop offset="0" stop-color="#123a8c"/><stop offset=".7" stop-color="#4a8ac6"/><stop offset="1" stop-color="#1d4f9f"/></linearGradient></defs>
<path d="M35 22l18-8v51l-18 1z" fill="url(#b)"/><path d="M54 14l19 10v8l-12 6v26l-7 2zM79 32l15 7-15 16z" fill="#dcdce0"/><path d="M63 39l14-6v25l-14 6zM12 50l16-7v21l-9-4z" fill="#173f94"/><path d="M29 42l4 1v22l-4-1z" fill="#ddd"/>
<path d="M11 36C27 6 66-4 88 6c13 6 17 17 13 31C99 18 88 9 66 9 42 9 24 19 11 36z" fill="#93c01f"/><path d="M8 43C2 58 14 69 37 69c32 0 56-13 67-34C98 62 66 82 38 82 12 82-4 63 8 43z" fill="#14398f"/></svg>
<div><strong>土木工程网</strong><a href="#">www.civilcn.com</a></div>`,
`:host{display:flex;width:374px;height:187px;background:#fff;color:#000;padding:52px 0 0 30px}svg{width:104px;height:84px;flex:none}div{display:flex;flex-direction:column;padding-top:10px}strong{font:italic 900 41px/40px "Noto Sans CJK SC",sans-serif;white-space:nowrap}a{font:italic 27px/28px "Noto Sans",sans-serif;-webkit-text-stroke:1px #000}`);

define("video-mark", () => `<svg viewBox="0 0 196 50" font-family="Noto Sans CJK SC, sans-serif" fill="#fff" stroke="#1c1c1c" stroke-width="5" paint-order="stroke" stroke-linejoin="round" font-weight="700" font-style="italic">
<text x="6" y="34" font-size="36">秒</text><text x="44" y="36" font-size="34" font-weight="600" font-family="Open Sans, sans-serif">d</text><text x="80" y="36" font-size="34" font-weight="600" font-family="Open Sans, sans-serif">ng</text><text x="120" y="34" font-size="34">视频</text>
<circle cx="71" cy="27" r="9" fill="#2685f5" stroke="#1c1c1c" stroke-width="1"/><path d="M68 22v10l8-5z" stroke="none"/><path d="M71 8l4 6 4-6" fill="none" stroke="#f5cf2c" stroke-width="3"/></svg>`, `:host{display:block;width:196px;height:50px}`);

define("cad-canvas", () => `<div class="model"><svg class="ucs" width="44" height="76" viewBox="0 0 44 76" fill="none" stroke="#3d5fc4" stroke-width="1.200"><path d="M1 1v72h42zM1 67h6v6M1 21q8 6 12 0M7 26l0-3-5-5M7 23l6-8M28 73c0-5 4-10 8-11M28 64l8 8M36 62l-6 10"/></svg>
<cad-sheet></cad-sheet><dim-style-dialog></dim-style-dialog><nav-bar></nav-bar><command-line></command-line></div><aside></aside>`,
`:host{display:flex;flex:1;min-height:0;background:#888}.model{flex:1;position:relative;overflow:hidden;min-width:0}aside{width:7px;background:#000}
cad-sheet{position:absolute;left:38px;top:20px;width:720px}.ucs{position:absolute;left:10px;bottom:8px;z-index:1}
dim-style-dialog{position:absolute;left:409px;top:45px;z-index:2}nav-bar{position:absolute;right:1px;top:3px}command-line{position:absolute;left:260px;right:0;bottom:0}`);

define("cad-app", () => `<cad-header></cad-header><ribbon-tabs></ribbon-tabs><cad-ribbon></cad-ribbon><doc-tabs></doc-tabs><cad-canvas></cad-canvas><layout-tabs></layout-tabs>
<video-mark></video-mark><tip-card></tip-card><site-brand></site-brand>`,
`:host{display:flex;flex-direction:column;height:100vh;position:relative;overflow:hidden}
video-mark{position:absolute;left:47px;top:44px}tip-card{position:absolute;right:89px;bottom:187px}site-brand{position:absolute;right:0;bottom:0}`);
</script>
</body>
</html>
